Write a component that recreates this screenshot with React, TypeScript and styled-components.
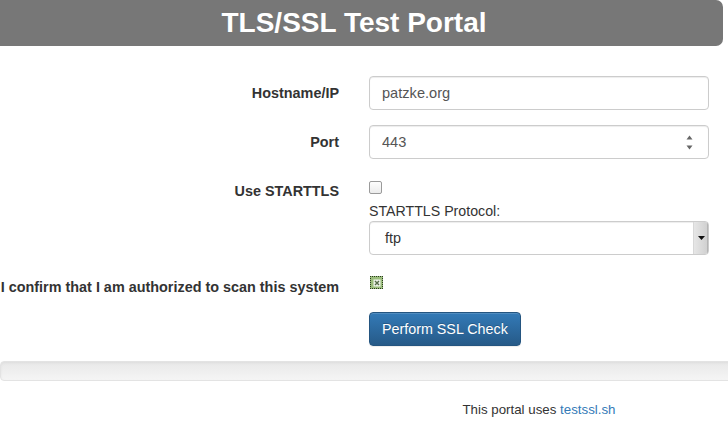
import React from "react";
import styled, { createGlobalStyle } from "styled-components";

const Global = createGlobalStyle`
  html, body { margin: 0; padding: 0; background: #fff; }
  body {
    font-family: "Liberation Sans", Arial, sans-serif;
    font-size: 14px;
    line-height: 20px;
    color: #333;
    overflow: hidden;
    width: 728px;
  }
`;

const Page = styled.div`
  width: 728px;
  height: 426px;
  overflow: hidden;
`;

const Header = styled.h1`
  margin: 0 5px 0 -15px;
  height: 46px;
  background: #777;
  border-radius: 0 7px 7px 0;
  color: #fff;
  font-size: 28px;
  font-weight: bold;
  line-height: 46px;
  text-align: center;
`;

const Form = styled.form`
  margin: 30px 0 0;
`;

const Row = styled.div<{ $gap?: number }>`
  display: grid;
  grid-template-columns: 339px 340px;
  column-gap: 30px;
  margin-bottom: ${(p) => (p.$gap ?? 15)}px;
`;

const Label = styled.label<{ $pt?: number }>`
  display: flex;
  justify-content: flex-end;
  white-space: nowrap;
  font-weight: bold;
  font-size: 14.4px;
  padding-top: ${(p) => (p.$pt ?? 7)}px;
  line-height: 20px;
`;

const Field = styled.div`
  display: flex;
  align-items: center;
  height: 34px;
  box-sizing: border-box;
  border: 1px solid #ccc;
  border-radius: 4px;
  box-shadow: inset 0 1px 1px rgba(0, 0, 0, 0.075);
  background: #fff;
  padding: 0 0 0 12px;
`;

const TextInput = styled.input`
  flex: 1;
  min-width: 0;
  border: 0;
  outline: none;
  padding: 0;
  font: inherit;
  font-size: 14.6px;
  color: #555;
  background: transparent;
`;

const Spinner = styled.div`
  display: flex;
  flex-direction: column;
  gap: 5px;
  width: 7px;
  margin-right: 15px;
  color: #666;
`;

const Tri = styled.svg`
  display: block;
  width: 7px;
  height: 5px;
`;

const Stack = styled.div`
  display: flex;
  flex-direction: column;
`;

const CheckWrap = styled.div<{ $pt?: number }>`
  padding-top: ${(p) => (p.$pt ?? 7)}px;
  height: 20px;
  display: flex;
  align-items: flex-start;
`;

const Box = styled.input`
  appearance: none;
  margin: 0;
  width: 13px;
  height: 13px;
  box-sizing: border-box;
  border: 1px solid #9a9a9a;
  border-radius: 2px;
  background: linear-gradient(#fdfdfd, #ececec);
`;

const GreenBox = styled.span`
  display: flex;
  align-items: center;
  justify-content: center;
  width: 13px;
  height: 13px;
  box-sizing: border-box;
  margin-left: 1px;
  border: 1px dotted #2b3a22;
  background: #9bbd7c;
`;

const SubLabel = styled.div`
  line-height: 20px;
  font-size: 14.2px;
`;

const Select = styled.div`
  display: flex;
  align-items: stretch;
  height: 34px;
  box-sizing: border-box;
  border: 1px solid #ccc;
  border-radius: 4px;
  box-shadow: inset 0 1px 1px rgba(0, 0, 0, 0.075);
  background: #fff;
  overflow: hidden;
`;

const SelectText = styled.span`
  flex: 1;
  padding-left: 15px;
  line-height: 32px;
  color: #333;
  font-size: 14.4px;
`;

const DropBtn = styled.span`
  width: 14px;
  display: flex;
  align-items: center;
  justify-content: center;
  background: linear-gradient(to right, #e6e6e6, #cfcfcf);
  border-left: 1px solid #d8d8d8;
  box-shadow: inset -1px 0 0 #b5b5b5;
`;

const Button = styled.button`
  justify-self: start;
  height: 34px;
  padding: 6px 12px;
  font: inherit;
  font-size: 14.3px;
  color: #fff;
  border: 1px solid #245580;
  border-radius: 4px;
  background: linear-gradient(to bottom, #337ab7 0, #265a88 100%);
  text-shadow: 0 -1px 0 rgba(0, 0, 0, 0.2);
  box-shadow: inset 0 1px 0 rgba(255, 255, 255, 0.15), 0 1px 1px rgba(0, 0, 0, 0.075);
`;

const Well = styled.div`
  height: 20px;
  box-sizing: border-box;
  margin: 1px -10px 0 0;
  border: 1px solid #e3e3e3;
  border-radius: 4px;
  background: linear-gradient(to bottom, #e8e8e8 0, #f5f5f5 100%);
  box-shadow: inset 0 1px 3px rgba(0, 0, 0, 0.05);
`;

const Footer = styled.div`
  display: grid;
  grid-template-columns: 339px 340px;
  column-gap: 30px;
  margin-top: 19px;
`;

const FooterText = styled.p`
  grid-column: 2;
  margin: 0;
  text-align: center;
  font-size: 13.3px;
`;

const Link = styled.a`
  color: #337ab7;
  text-decoration: none;
`;

export default function App() {
  return (
    <Page>
      <Global />
      <Header>TLS/SSL Test Portal</Header>
      <Form onSubmit={(e) => e.preventDefault()}>
        <Row>
          <Label>Hostname/IP</Label>
          <Field>
            <TextInput defaultValue="patzke.org" />
          </Field>
        </Row>
        <Row>
          <Label>Port</Label>
          <Field>
            <TextInput defaultValue="443" />
            <Spinner>
              <Tri viewBox="0 0 7 5">
                <path d="M3.5 0.5 L6.5 4.5 L0.5 4.5 Z" fill="currentColor" />
              </Tri>
              <Tri viewBox="0 0 7 5">
                <path d="M0.5 0.5 L6.5 0.5 L3.5 4.5 Z" fill="currentColor" />
              </Tri>
            </Spinner>
          </Field>
        </Row>
        <Row>
          <Label>Use STARTTLS</Label>
          <Stack>
            <CheckWrap>
              <Box type="checkbox" />
            </CheckWrap>
            <SubLabel>STARTTLS Protocol:</SubLabel>
            <Select>
              <SelectText>ftp</SelectText>
              <DropBtn>
                <svg width="7" height="4" viewBox="0 0 7 4">
                  <path d="M0 0 L7 0 L3.5 4 Z" fill="#111" />
                </svg>
              </DropBtn>
            </Select>
          </Stack>
        </Row>
        <Row>
          <Label>I confirm that I am authorized to scan this system</Label>
          <CheckWrap $pt={6}>
            <GreenBox>
              <svg width="8" height="8" viewBox="0 0 8 8">
                <rect x="0.5" y="0.5" width="7" height="7" fill="#eef3ea" />
                <path d="M2 2 L6 6 M6 2 L2 6" stroke="#556b48" strokeWidth="1.4" />
              </svg>
            </GreenBox>
          </CheckWrap>
        </Row>
        <Row $gap={15}>
          <span />
          <Button type="submit">Perform SSL Check</Button>
        </Row>
      </Form>
      <Well />
      <Footer>
        <FooterText>
          This portal uses <Link href="#">testssl.sh</Link>
        </FooterText>
      </Footer>
    </Page>
  );
}
